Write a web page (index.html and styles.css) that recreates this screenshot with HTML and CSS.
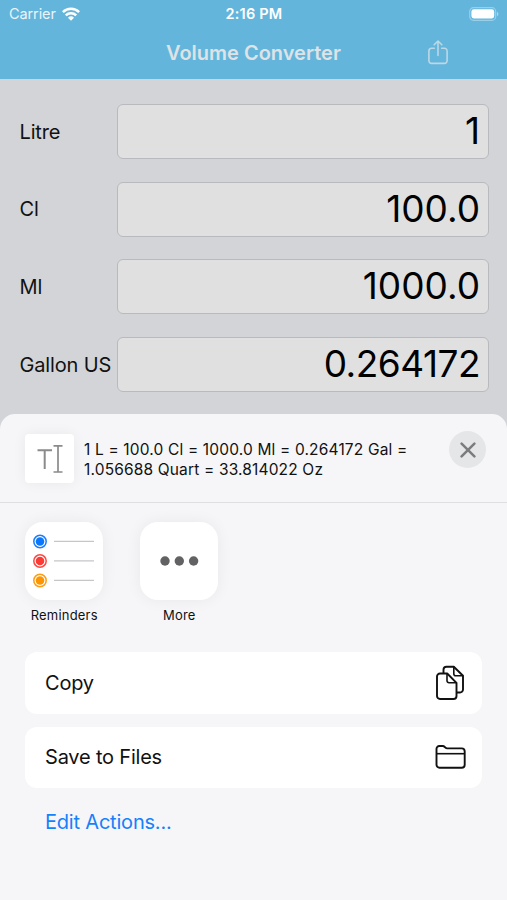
FILE: index.html
```html
<!DOCTYPE html>
<html lang="en">
<head>
  <meta charset="UTF-8">
  <title>Volume Converter</title>
  <link rel="stylesheet" href="styles.css">
</head>
<body>
  <header>
    <div class="status-bar">
      <div class="carrier">
        <span>Carrier</span>
        <svg width="18" height="14" viewBox="0 0 18 14" fill="none" stroke="#fff" stroke-width="2.5">
          <path d="M0.9 5.2a11.5 11.5 0 0 1 16.2 0"/>
          <path d="M3.8 8.3a7.4 7.4 0 0 1 10.4 0"/>
          <path d="M9 13.8l-3-3.1a4.3 4.3 0 0 1 6 0z" fill="#fff" stroke="none"/>
        </svg>
      </div>
      <span class="clock">2:16 PM</span>
      <div class="battery">
        <svg width="30" height="14" viewBox="0 0 30 14">
          <rect x="0.7" y="0.7" width="26" height="12.6" rx="3.8" fill="none" stroke="#fff" stroke-opacity=".35" stroke-width="1.2"/>
          <rect x="2.4" y="2.3" width="22.8" height="9.2" rx="2.4" fill="#fff"/>
          <path d="M28 5v4c1.8-.5 1.8-3.5 0-4z" fill="#fff" fill-opacity=".45"/>
        </svg>
      </div>
    </div>
    <div class="nav-bar">
      <h1>Volume Converter</h1>
      <svg class="share" width="20" height="25" viewBox="0 0 20 25" fill="none" stroke="#bcd8e4" stroke-width="1.6" stroke-linecap="round" stroke-linejoin="round">
        <path d="M6.3 8.2H3.6a2.700 2.700 0 0 0-2.700 2.700v9.800a2.700 2.700 0 0 0 2.700 2.700h12.800a2.700 2.700 0 0 0 2.700-2.700v-9.800a2.700 2.700 0 0 0-2.700-2.700h-2.700"/>
        <path d="M10 15.5V1.2M6.2 4.8L10 1l3.800 3.800"/>
      </svg>
    </div>
  </header>

  <main class="converter">
    <label for="litre">Litre</label>
    <input type="text" id="litre" value="1">
    <label for="cl">Cl</label>
    <input type="text" id="cl" value="100.0">
    <label for="ml">Ml</label>
    <input type="text" id="ml" value="1000.0">
    <label for="gallon">Gallon US</label>
    <input type="text" id="gallon" class="long" value="0.264172">
  </main>

  <section class="sheet">
    <div class="sheet-header">
      <div class="thumb">
        <svg width="50" height="50" viewBox="0 0 50 50" fill="none" stroke="#8b8b8b">
          <path d="M12.5 16.300h14.500M19.700 16.300V35" stroke-width="2"/>
          <path d="M28.500 11.800h9M28.500 38h9M33 11.800v26.200" stroke-width="1.7"/>
        </svg>
      </div>
      <p>1 L = 100.0 Cl = 1000.0 Ml = 0.264172 Gal =<br>1.056688 Quart = 33.814022 Oz</p>
      <button class="close" aria-label="Close">
        <svg width="16" height="16" viewBox="0 0 16 16" stroke="#7b7c7e" stroke-width="2.5" stroke-linecap="round">
          <path d="M1.600 1.600l12.800 12.800M14.400 1.600L1.600 14.400"/>
        </svg>
      </button>
    </div>

    <div class="apps">
      <div class="app">
        <div class="app-icon">
          <svg width="78" height="78" viewBox="0 0 78 78">
            <g stroke="#c6c6c9" stroke-width="1.3">
              <path d="M29 19.300h40M29 38.900h40M29 58.400h40"/>
            </g>
            <g fill="#fff" stroke-width="1.5">
              <circle cx="15" cy="19.500" r="6.200" stroke="#1b7dfa"/>
              <circle cx="15" cy="39" r="6.200" stroke="#fb4a45"/>
              <circle cx="15" cy="58.500" r="6.200" stroke="#fc9d15"/>
            </g>
            <circle cx="15" cy="19.500" r="4.300" fill="#0a77ff"/>
            <circle cx="15" cy="39" r="4.300" fill="#fc3b35"/>
            <circle cx="15" cy="58.500" r="4.300" fill="#fd9500"/>
          </svg>
        </div>
        <span>Reminders</span>
      </div>
      <div class="app">
        <div class="app-icon">
          <svg width="78" height="78" viewBox="0 0 78 78" fill="#626264">
            <circle cx="25" cy="39" r="4.700"/>
            <circle cx="39.300" cy="39" r="4.700"/>
            <circle cx="53.600" cy="39" r="4.700"/>
          </svg>
        </div>
        <span>More</span>
      </div>
    </div>

    <div class="actions">
      <div class="action">
        <span>Copy</span>
        <svg width="32" height="36" viewBox="0 0 32 36" fill="none" stroke="#111" stroke-width="1.9" stroke-linejoin="round">
          <path d="M8.500 8V4.800a3 3 0 0 1 3-3h7.300l9.200 9V24.500a3 3 0 0 1-3 3h-3.500"/>
          <path d="M18.800 1.800v6.900a2 2 0 0 0 2 2h7.200" stroke-width="1.6"/>
          <path d="M5 8.500h7.200l9.300 9.300v13.200a3 3 0 0 1-3 3H5a3 3 0 0 1-3-3V11.500a3 3 0 0 1 3-3z" fill="#fff"/>
          <path d="M12 8.500v7.200a2 2 0 0 0 2 2h7.500" stroke-width="1.6"/>
        </svg>
      </div>
      <div class="action">
        <span>Save to Files</span>
        <svg width="32" height="26" viewBox="0 0 32 26" fill="none" stroke="#111" stroke-width="1.9" stroke-linejoin="round">
          <path d="M1.500 20.700V4.800a2.800 2.800 0 0 1 2.800-2.800h3.500c1.800 0 2.600 2.400 4.400 2.400h14.500a3 3 0 0 1 3 3v13.300a3 3 0 0 1-3 3H4.500a3 3 0 0 1-3-3z"/>
          <path d="M1.500 9.700h28.200" stroke-width="1.6"/>
        </svg>
      </div>
      <a class="edit">Edit Actions...</a>
    </div>
  </section>
</body>
</html>
```
FILE: styles.css
```css
* {
  box-sizing: border-box;
}
body {
  margin: 0;
  height: 900px;
  overflow: hidden;
  display: flex;
  flex-direction: column;
  font-family: Inter, "Liberation Sans", sans-serif;
  background: #d2d4d8;
  color: #111;
}
header {
  height: 79px;
  background: #64b5dc;
  color: #fff;
}
.status-bar {
  height: 27px;
  padding: 0 8px 0 9px;
  display: grid;
  grid-template-columns: 1fr auto 1fr;
  align-items: center;
}
.carrier {
  display: flex;
  align-items: center;
  gap: 6px;
  font-size: 14.5px;
  letter-spacing: -0.1px;
  color: #e9f4fa;
}
.clock {
  font-size: 14.5px;
  font-weight: 600;
  letter-spacing: 0.2px;
}
.battery {
  display: flex;
  justify-content: flex-end;
}
.nav-bar {
  height: 51px;
  padding: 0 59px 0 166px;
  display: flex;
  align-items: center;
  justify-content: space-between;
}
h1 {
  margin: 0;
  font-size: 20px;
  font-weight: 600;
  color: #dde3e6;
  white-space: nowrap;
}
.converter {
  height: 335px;
  padding: 25px 18px 0 19.5px;
  display: grid;
  grid-template-columns: 97.5px 1fr;
  grid-auto-rows: 55px;
  align-content: start;
  align-items: center;
  row-gap: 22.700px;
}
label {
  font-size: 20px;
  letter-spacing: -0.15px;
  white-space: nowrap;
}
input {
  width: 100%;
  height: 55px;
  padding: 0 8px 2px;
  border: 1px solid #b9babd;
  border-radius: 6px;
  background: #e0e0e0;
  font-family: inherit;
  font-size: 37px;
  color: #000;
  text-align: right;
}
.long {
  letter-spacing: -0.5px;
}
.sheet {
  flex: 1;
  border-radius: 15px 15px 0 0;
  background: #f6f6f8;
}
.sheet-header {
  height: 89px;
  padding: 20px 21px 0 25px;
  display: flex;
  align-items: flex-start;
  border-bottom: 1px solid #dfdfe1;
}
.thumb {
  width: 49px;
  height: 49px;
  border-radius: 4px;
  background: #fff;
  box-shadow: 0 0 14px rgba(0,0,0,0.06);
}
.sheet-header p {
  margin: 6px 0 0 10px;
  flex: 1;
  font-size: 15.5px;
  letter-spacing: 0.16px;
  line-height: 19.5px;
  white-space: nowrap;
}
.close {
  width: 37px;
  height: 37px;
  margin-top: -3px;
  padding: 0;
  display: flex;
  align-items: center;
  justify-content: center;
  border: none;
  border-radius: 50%;
  background: #e5e6e7;
}
.apps {
  height: 149px;
  padding: 19px 25px 0;
  display: flex;
  gap: 36.5px;
}
.app {
  width: 78.5px;
  display: flex;
  flex-direction: column;
  align-items: center;
  gap: 7px;
  font-size: 13px;
  letter-spacing: 0.2px;
}
.app-icon {
  width: 78px;
  height: 78px;
  border-radius: 18px;
  background: #fff;
  box-shadow: 0 0 16px rgba(0,0,0,0.06);
}
.actions {
  padding: 0 25px;
  display: flex;
  flex-direction: column;
  gap: 13px;
  font-size: 20px;
  letter-spacing: -0.2px;
}
.action {
  height: 61.5px;
  padding: 0 15px 0 20px;
  display: flex;
  align-items: center;
  justify-content: space-between;
  border-radius: 12px;
  background: #fff;
}
.edit {
  padding: 9px 20px;
  color: #1581fb;
}
```
